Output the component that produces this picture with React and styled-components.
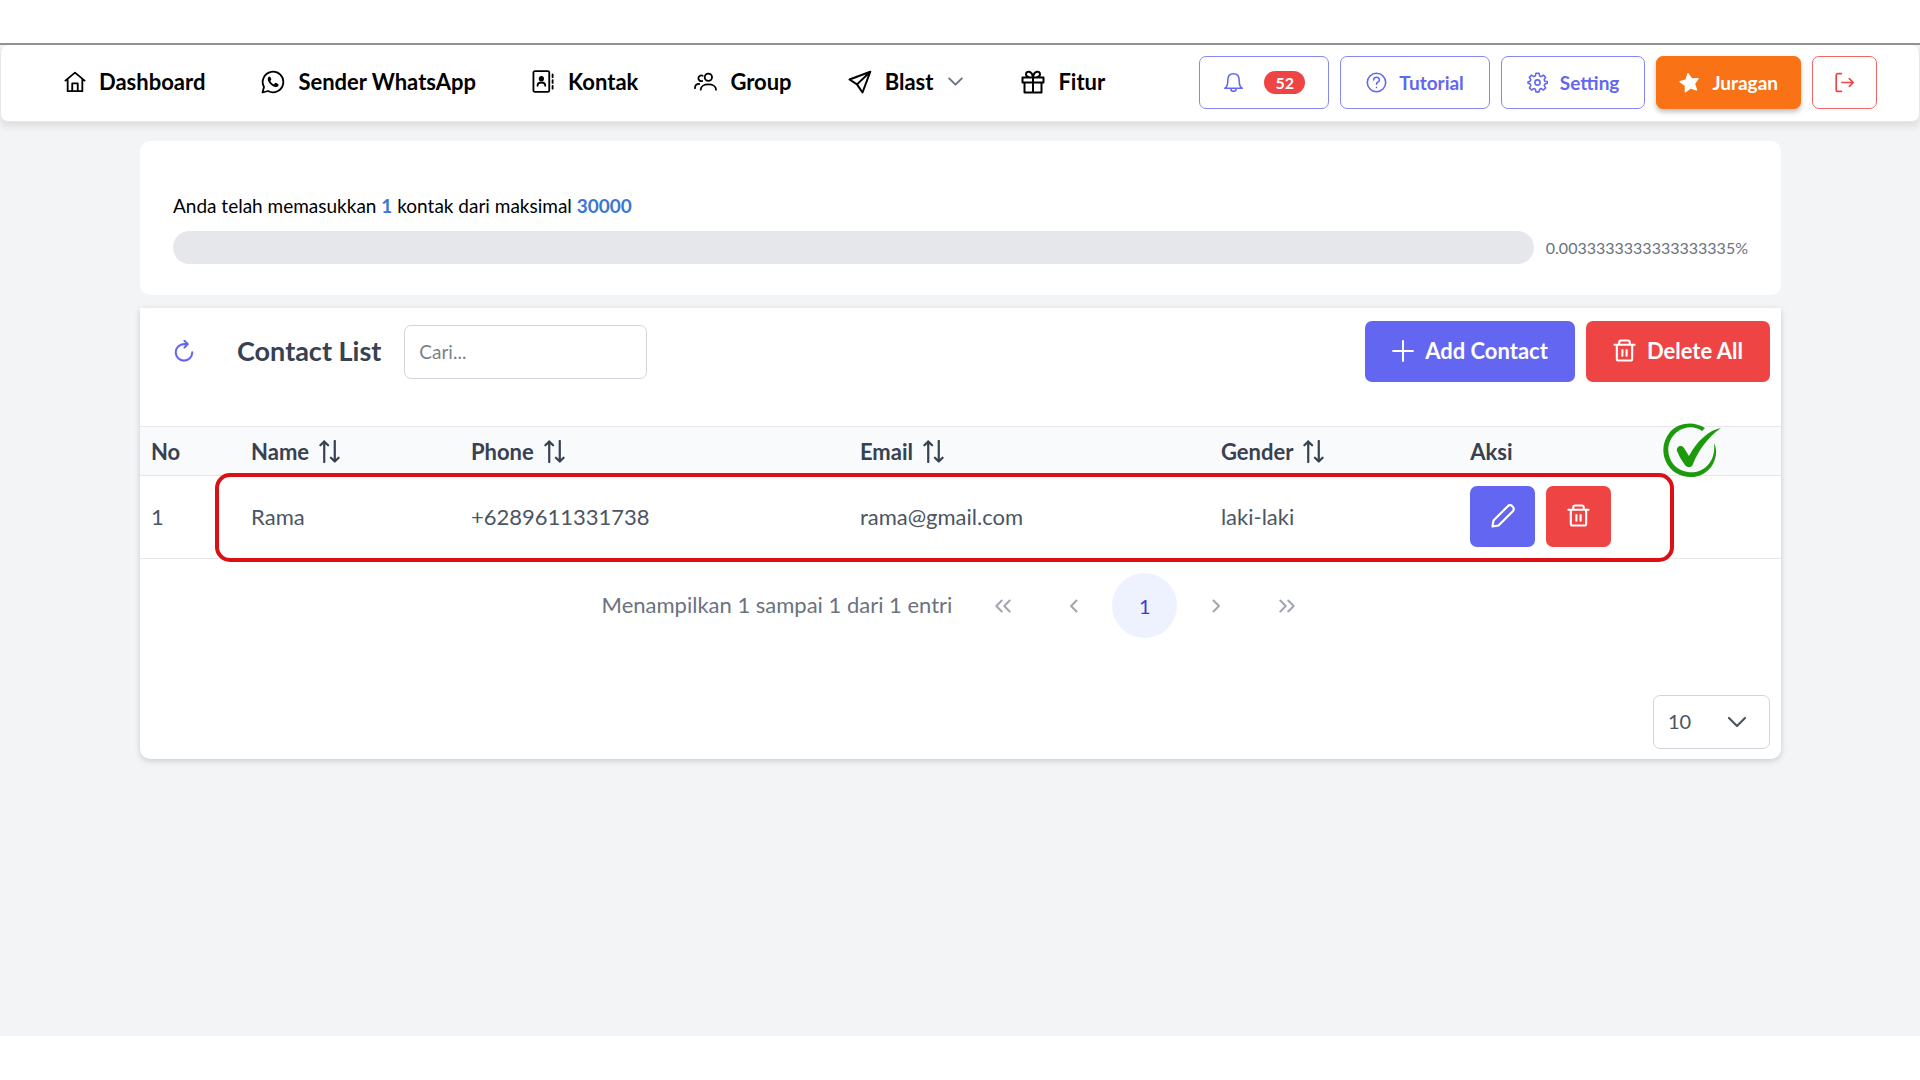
import React, { useState } from "react";
import styled, { createGlobalStyle } from "styled-components";

const GlobalStyle = createGlobalStyle`
  * {
    box-sizing: border-box;
  }

  body {
    margin: 0;
    background-color: white;
    color: black;
    font-family: Lato, "Liberation Sans", sans-serif;
  }

  button,
  input,
  select {
    font-family: inherit;
  }
`;

const Page = styled.div`
  min-height: 100vh;
  padding: 43px 0 44px;
  display: flex;
  flex-direction: column;
`;

const Screen = styled.div`
  flex: 1;
  border-top: 2px solid #939393;
  background-color: #f3f4f6;
`;

const Navbar = styled.header`
  min-height: 77px;
  padding: 0 42px 1px 63px;
  display: flex;
  align-items: center;
  justify-content: space-between;
  background-color: white;
  border: 1px solid #e5e7eb;
  border-top: none;
  border-radius: 8px;
  box-shadow: 0 4px 8px rgba(0, 0, 0, 0.1);
`;

const Menu = styled.nav`
  padding-bottom: 2px;
  display: flex;
  align-items: center;
  gap: 56px;
`;

const MenuLink = styled.a`
  display: flex;
  align-items: center;
  gap: 13px;
  color: black;
  font-size: 22px;
  font-weight: 700;
  text-decoration: none;
  white-space: nowrap;
`;

const SubmenuArrow = styled.span`
  display: flex;
  color: #6b7280;
`;

const Actions = styled.div`
  display: flex;
  align-items: center;
  gap: 11px;
`;

const NavButton = styled.button`
  height: 53px;
  padding: 0 ${(props) => props.$pad || 25}px;
  display: flex;
  align-items: center;
  gap: 12px;
  border: 1px solid ${(props) => props.$line};
  border-radius: 7px;
  background-color: ${(props) => props.$fill || "white"};
  color: ${(props) => props.$color};
  box-shadow: ${(props) => (props.$raised ? "0 3px 5px rgba(0, 0, 0, 0.25)" : "none")};
  font-size: 19px;
  font-weight: 700;
  white-space: nowrap;
  cursor: pointer;
`;

const Badge = styled.span`
  min-width: 41px;
  height: 23px;
  margin-left: 8px;
  border-radius: 12px;
  background-color: #ef4444;
  color: white;
  font-size: 16px;
  line-height: 23px;
  text-align: center;
`;

const Content = styled.main`
  padding: 19px 139px 19px 140px;
  display: flex;
  flex-direction: column;
  gap: 13px;
`;

const QuotaCard = styled.section`
  padding: 53px 33px 31px;
  border-radius: 10px;
  background-color: white;
`;

const QuotaText = styled.p`
  margin: 0 0 13px;
  font-size: 19px;
  line-height: 24px;
`;

const Blue = styled.span`
  color: #3b76d2;
  font-weight: 700;
`;

const QuotaRow = styled.div`
  display: flex;
  align-items: center;
  gap: 12px;
`;

const Track = styled.div`
  flex: 1;
  height: 33px;
  border-radius: 17px;
  background-color: #e5e7eb;
`;

const Percent = styled.span`
  color: #6b7280;
  font-size: 16px;
`;

const ContactCard = styled.section`
  border-radius: 0 0 10px 10px;
  background-color: white;
  box-shadow: 0 2px 6px rgba(0, 0, 0, 0.16);
`;

const Toolbar = styled.div`
  padding: 13px 11px 44px 33px;
  display: flex;
  align-items: center;
  justify-content: space-between;
`;

const Group = styled.div`
  display: flex;
  align-items: center;
  gap: ${(props) => props.$gap}px;
`;

const RefreshButton = styled.button`
  width: 22px;
  height: 24px;
  margin-right: 19px;
  padding: 0;
  border: none;
  background: none;
  color: #6366f1;
  cursor: pointer;
`;

const Title = styled.h1`
  margin: 0;
  padding-bottom: 2px;
  color: #374151;
  font-size: 27px;
  font-weight: 700;
`;

const SearchInput = styled.input`
  width: 243px;
  height: 54px;
  padding: 0 14px;
  border: 1px solid #d1d5db;
  border-radius: 7px;
  color: #4b5563;
  font-size: 19px;

  &::placeholder {
    color: #7b828e;
    opacity: 1;
  }
`;

const SolidButton = styled.button`
  height: 61px;
  min-width: 65px;
  padding: 0 ${(props) => (props.$icon ? 0 : 27)}px 2px;
  display: flex;
  align-items: center;
  justify-content: center;
  gap: 11px;
  border: none;
  border-radius: 7px;
  background-color: ${(props) => props.$fill};
  color: white;
  font-size: 22px;
  font-weight: 700;
  white-space: nowrap;
  cursor: pointer;
`;

const TableWrap = styled.div`
  position: relative;
`;

const Table = styled.table`
  width: 100%;
  table-layout: fixed;
  border-collapse: collapse;
`;

const HeadCell = styled.th`
  width: ${(props) => props.$width};
  height: 49px;
  padding: 0 11px;
  border-top: 1px solid #e5e7eb;
  border-bottom: 1px solid #e5e7eb;
  background-color: #f9fafb;
  color: #374151;
  font-size: 22px;
  font-weight: 700;
  text-align: left;
`;

const Cell = styled.td`
  height: 83px;
  padding: 0 11px 1px;
  border-bottom: 1px solid #e5e7eb;
  color: #4b5563;
  font-size: 22px;
`;

const Highlight = styled.div`
  position: absolute;
  top: 47px;
  bottom: -3px;
  left: 75px;
  right: 107px;
  border: 4px solid #dc1014;
  border-radius: 15px;
  pointer-events: none;
`;

const CheckMark = styled.svg`
  position: absolute;
  top: -3px;
  right: 60px;
  width: 58px;
  height: 56px;
`;

const Paginator = styled.div`
  padding: 14px 0;
  display: flex;
  align-items: center;
  justify-content: center;
  gap: 6px;
  color: #6b7280;
  font-size: 22px;
`;

const PageReport = styled.span`
  margin-right: 12px;
  padding-bottom: 2px;
`;

const PageButton = styled.button`
  width: 65px;
  height: 65px;
  padding: 0;
  display: flex;
  align-items: center;
  justify-content: center;
  border: none;
  border-radius: 50%;
  background-color: ${(props) => (props.$active ? "#eef2ff" : "transparent")};
  color: ${(props) => (props.$active ? "#4338ca" : "#a2a7b0")};
  font-size: 20px;
  cursor: pointer;
`;

const CardFooter = styled.div`
  padding: 43px 11px 10px;
  display: flex;
  justify-content: flex-end;
`;

const SelectBox = styled.div`
  display: grid;
  align-items: center;

  > * {
    grid-area: 1 / 1;
  }

  > svg {
    justify-self: end;
    margin-right: 21px;
    color: #4b5563;
    pointer-events: none;
  }
`;

const Select = styled.select`
  width: 117px;
  height: 54px;
  padding: 0 14px 2px;
  appearance: none;
  border: 1px solid #d1d5db;
  border-radius: 7px;
  background-color: white;
  color: #4b5563;
  font-size: 20px;
`;

const Icon = ({ size = 22, stroke = 2, children }) => (
  <svg
    width={size}
    height={size}
    viewBox="0 0 24 24"
    fill="none"
    stroke="currentColor"
    strokeWidth={stroke}
    strokeLinecap="round"
    strokeLinejoin="round"
    aria-hidden="true"
  >
    {children}
  </svg>
);

const HomeIcon = () => (
  <Icon>
    <path d="M1.5 10.5 12 1.8l10.5 8.7M4 9v13h16V9M9 22v-8.5h6V22" />
  </Icon>
);

const WhatsappIcon = () => (
  <Icon size={24} stroke={1.8}>
    <path d="M1.5 22.5 3 17A10.3 10.3 0 1 1 7 21z" />
    <path
      d="M8.6 6.5c-.5 0-1.9.7-1.9 2.6 0 3.3 4.7 8 8 8 1.9 0 3-1.3 3-2.4 0-.5-2.7-1.9-3.2-1.9-.5 0-1 1.4-1.6 1.4-1 0-3.5-2.3-3.5-3.3 0-.4.9-.9.9-1.5 0-.5-.8-2.9-1.7-2.9z"
      fill="currentColor"
      stroke="none"
    />
  </Icon>
);

const ContactsIcon = () => (
  <Icon size={23} stroke={1.9}>
    <rect x="1.5" y="1.2" width="16.5" height="21.6" rx="1.5" />
    <circle cx="9.8" cy="9" r="2.7" fill="currentColor" stroke="none" />
    <path d="M5.8 16.5c0-4.600 8-4.600 8 0M21.5 4.500v3M21.5 10.500v3M21.5 16.500v3" />
  </Icon>
);

const UsersIcon = () => (
  <Icon size={23} stroke={1.9}>
    <circle cx="15" cy="7.5" r="3.8" />
    <path d="M7 20.5c0-7.3 16-7.3 16 0M9 6a3 3 0 1 0-.5 5.500M1 19c0-3.200 1.500-4.500 4.500-4.500" />
  </Icon>
);

const SendIcon = () => (
  <Icon size={24}>
    <path d="M22.3 1.7 1.5 9.500l7.500 4.900 5.500 8.100zM22.300 1.700 9 14.400" />
  </Icon>
);

const GiftIcon = () => (
  <Icon size={24}>
    <path d="M1.5 7.5h21v5h-21zM3.5 12.5h17v10h-17zM12 7.5v15M12 7.5C9 7.5 5 7 5 4.2 5 .5 11 .5 12 7.5 13 .5 19 .5 19 4.2 19 7 15 7.5 12 7.5z" />
  </Icon>
);

const ChevronIcon = ({ size, stroke }) => (
  <Icon size={size} stroke={stroke}>
    <path d="m4 8 8 8 8-8" />
  </Icon>
);

const BellIcon = () => (
  <Icon size={21} stroke={1.8}>
    <path d="M2 18.5c3.200-1 3.500-4 3.500-9 0-4.500 2.500-7.500 6.500-7.500s6.500 3 6.500 7.500c0 5 .3 8 3.500 9zM9 19c0 4 6 4 6 0" />
  </Icon>
);

const QuestionIcon = () => (
  <Icon size={21} stroke={1.8}>
    <circle cx="12" cy="12" r="10.5" />
    <path d="M8.7 9.2c0-4.400 6.600-4.200 6.600-.2 0 2.600-3.300 2.200-3.300 5M12 17.500v.2" />
  </Icon>
);

const CogIcon = () => (
  <Icon size={21} stroke={1.8}>
    <circle cx="12" cy="12" r="3" />
    <path d="M10.2 1.5h3.600l.6 3 1.800.8 2.600-1.700 2.500 2.500-1.700 2.600.8 1.800 3 .6v1.800l-3 .8-.8 1.800 1.700 2.600-2.500 2.500-2.600-1.700-1.800.8-.6 3h-3.600l-.6-3-1.800-.8-2.600 1.700-2.500-2.500 1.700-2.600-.8-1.800-2.400-.8v-1.800l2.400-.6.8-1.800-1.700-2.600 2.500-2.500 2.600 1.700 1.800-.8z" />
  </Icon>
);

const StarIcon = () => (
  <Icon size={21} stroke={1.6}>
    <path
      d="m12 1.800 3.200 6.500 7.200 1-5.200 5.100 1.200 7.200-6.400-3.400-6.400 3.400 1.200-7.200-5.200-5.100 7.200-1z"
      fill="currentColor"
      transform="rotate(-10 12 12)"
    />
  </Icon>
);

const LogoutIcon = () => (
  <Icon size={21} stroke={1.9}>
    <path d="M8.5 1.8h-4a2 2 0 0 0-2 2v16.400a2 2 0 0 0 2 2h4M9 12h13M17.500 7.500 22 12l-4.500 4.500" />
  </Icon>
);

const RefreshIcon = () => (
  <Icon size={22} stroke={2.2}>
    <path d="M12 4.5a9 9 0 1 0 9 9M12 4.500h4M12.500.8l3.700 3.700-3.700 3.700" />
  </Icon>
);

const PlusIcon = () => (
  <Icon stroke={2.2}>
    <path d="M12 1.2v21.600M1.200 12h21.600" />
  </Icon>
);

const TrashIcon = () => (
  <Icon size={23} stroke={2.2}>
    <path d="M1.5 6h21M4 6v14.500a2 2 0 0 0 2 2h12a2 2 0 0 0 2-2V6M6.500 6V3.500a2 2 0 0 1 2-2h7a2 2 0 0 1 2 2V6M9.800 11.500v6M14.200 11.500v6" />
  </Icon>
);

const PencilIcon = () => (
  <Icon size={24} stroke={2.2}>
    <path d="M1.5 22.5 2.5 16.5 16.8 2.2a3 3 0 0 1 4.500 0l.5.500a3 3 0 0 1 0 4.500L7.500 21.500z" />
  </Icon>
);

const SortIcon = () => (
  <Icon size={23} stroke={2.3}>
    <path d="M6.5 23V1.500M2.500 5.500l4-4 4 4M17.500 1v21.500M13.500 18.500l4 4 4-4" />
  </Icon>
);

const AngleIcon = ({ flip, double }) => (
  <Icon size={20} stroke={2.5}>
    <g transform={flip ? "matrix(-1 0 0 1 24 0)" : undefined}>
      {double ? (
        <path d="m10.500 5.500-6.500 6.500 6.500 6.500M20 5.500l-6.500 6.500 6.500 6.500" />
      ) : (
        <path d="m15 5.500-6.500 6.500 6.500 6.500" />
      )}
    </g>
  </Icon>
);

const menu = [
  { label: "Dashboard", icon: <HomeIcon /> },
  { label: "Sender WhatsApp", icon: <WhatsappIcon /> },
  { label: "Kontak", icon: <ContactsIcon /> },
  { label: "Group", icon: <UsersIcon /> },
  { label: "Blast", icon: <SendIcon />, submenu: true },
  { label: "Fitur", icon: <GiftIcon /> },
];

const columns = [
  { label: "No", width: "6.1%" },
  { label: "Name", width: "13.4%", sortable: true },
  { label: "Phone", width: "23.7%", sortable: true },
  { label: "Email", width: "22%", sortable: true },
  { label: "Gender", width: "15.2%", sortable: true },
  { label: "Aksi" },
];

const contacts = [
  { name: "Rama", phone: "+6289611331738", email: "rama@gmail.com", gender: "laki-laki" },
];

const Header = () => (
  <Navbar>
    <Menu>
      {menu.map((item) => (
        <MenuLink href="#" key={item.label}>
          {item.icon}
          {item.label}
          {item.submenu && (
            <SubmenuArrow>
              <ChevronIcon size={19} stroke={2.4} />
            </SubmenuArrow>
          )}
        </MenuLink>
      ))}
    </Menu>
    <Actions>
      <NavButton $line="#8587f3" $color="#6366f1" $pad={23} aria-label="Notifikasi">
        <BellIcon />
        <Badge>52</Badge>
      </NavButton>
      <NavButton $line="#8587f3" $color="#6366f1">
        <QuestionIcon />
        Tutorial
      </NavButton>
      <NavButton $line="#8587f3" $color="#6366f1">
        <CogIcon />
        Setting
      </NavButton>
      <NavButton $line="#f97316" $color="white" $fill="#f97316" $pad={22} $raised>
        <StarIcon />
        Juragan
      </NavButton>
      <NavButton $line="#ef6666" $color="#ef4444" $pad={21} aria-label="Keluar">
        <LogoutIcon />
      </NavButton>
    </Actions>
  </Navbar>
);

const Quota = () => (
  <QuotaCard>
    <QuotaText>
      Anda telah memasukkan <Blue>1</Blue> kontak dari maksimal <Blue>30000</Blue>
    </QuotaText>
    <QuotaRow>
      <Track />
      <Percent>0.0033333333333333335%</Percent>
    </QuotaRow>
  </QuotaCard>
);

const ContactTable = () => (
  <TableWrap>
    <Table>
      <thead>
        <tr>
          {columns.map((column) => (
            <HeadCell key={column.label} $width={column.width}>
              <Group $gap={9}>
                {column.label}
                {column.sortable && <SortIcon />}
              </Group>
            </HeadCell>
          ))}
        </tr>
      </thead>
      <tbody>
        {contacts.map((contact, index) => (
          <tr key={contact.phone}>
            <Cell>{index + 1}</Cell>
            <Cell>{contact.name}</Cell>
            <Cell>{contact.phone}</Cell>
            <Cell>{contact.email}</Cell>
            <Cell>{contact.gender}</Cell>
            <Cell>
              <Group $gap={11}>
                <SolidButton $icon $fill="#6366f1" aria-label="Edit">
                  <PencilIcon />
                </SolidButton>
                <SolidButton $icon $fill="#ef4444" aria-label="Hapus">
                  <TrashIcon />
                </SolidButton>
              </Group>
            </Cell>
          </tr>
        ))}
      </tbody>
    </Table>
    <Highlight />
    <CheckMark viewBox="0 0 58 56" fill="#1c9a0c" aria-hidden="true">
      <path d="M42 5C31-2 16-1 7 9-4 22-1 41 13 50c13 8 30 4 37-9 4-8 4-15 1-21 1 9-1 17-7 23-9 9-24 8-33-1C2 31 4 17 14 9 22 3 32 3 39 8z" />
      <path d="M58 5C46 7 34 18 26 33l-5-8c-3-4-8-1-7 3 2 5 5 10 8 14 2 3 7 3 8-1C35 28 45 14 58 5z" />
    </CheckMark>
  </TableWrap>
);

const App = () => {
  const [search, setSearch] = useState("");
  const [rows, setRows] = useState("10");

  return (
    <>
      <GlobalStyle />
      <Page>
        <Screen>
          <Header />
          <Content>
            <Quota />
            <ContactCard>
              <Toolbar>
                <Group $gap={23}>
                  <RefreshButton aria-label="Muat ulang">
                    <RefreshIcon />
                  </RefreshButton>
                  <Title>Contact List</Title>
                  <SearchInput
                    aria-label="Cari kontak"
                    placeholder="Cari..."
                    value={search}
                    onChange={(e) => setSearch(e.target.value)}
                  />
                </Group>
                <Group $gap={11}>
                  <SolidButton $fill="#6366f1">
                    <PlusIcon />
                    Add Contact
                  </SolidButton>
                  <SolidButton $fill="#ef4444">
                    <TrashIcon />
                    Delete All
                  </SolidButton>
                </Group>
              </Toolbar>
              <ContactTable />
              <Paginator>
                <PageReport>Menampilkan 1 sampai 1 dari 1 entri</PageReport>
                <PageButton aria-label="Halaman pertama">
                  <AngleIcon double />
                </PageButton>
                <PageButton aria-label="Sebelumnya">
                  <AngleIcon />
                </PageButton>
                <PageButton $active>1</PageButton>
                <PageButton aria-label="Berikutnya">
                  <AngleIcon flip />
                </PageButton>
                <PageButton aria-label="Halaman terakhir">
                  <AngleIcon flip double />
                </PageButton>
              </Paginator>
              <CardFooter>
                <SelectBox>
                  <Select
                    aria-label="Baris per halaman"
                    value={rows}
                    onChange={(e) => setRows(e.target.value)}
                  >
                    <option>10</option>
                    <option>25</option>
                    <option>50</option>
                  </Select>
                  <ChevronIcon size={24} stroke={2.2} />
                </SelectBox>
              </CardFooter>
            </ContactCard>
          </Content>
        </Screen>
      </Page>
    </>
  );
};

export default App;
